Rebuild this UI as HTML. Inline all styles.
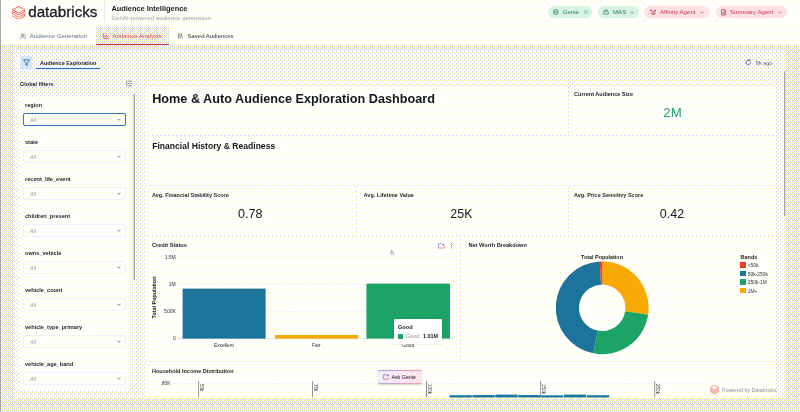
<!DOCTYPE html>
<html><head><meta charset="utf-8"><title>Audience Intelligence</title>
<style>
*{box-sizing:border-box;margin:0;padding:0}
html,body{width:800px;height:412px;overflow:hidden}
body{position:relative;background:#ededef;font-family:"Liberation Sans",Arial,sans-serif;color:#161b22}
.a{position:absolute;white-space:nowrap}
.t{position:absolute;white-space:nowrap;height:10px;line-height:10px}
.b{font-weight:700}
.card{position:absolute;background:#fffffb}
.lbl{font-size:5.5px;font-weight:700;color:#1b2128}
.sel{position:absolute;left:23.4px;width:102.4px;height:13.6px;border:0.7px solid #f1f1f7;border-radius:2px;background:transparent}
.sel i{position:absolute;left:5.6px;top:1.3px;height:10px;line-height:10px;font-size:5.4px;color:#8f979f}
.sel svg{position:absolute;right:4px;top:4.6px}
.flab{position:absolute;left:25px;height:10px;line-height:10px;font-size:5.6px;font-weight:700;color:#1b2128;white-space:nowrap}
.pill{position:absolute;top:6.1px;height:12.3px;border-radius:6.2px}
.pill span{position:absolute;top:1.2px;height:10px;line-height:10px;font-size:6.1px;white-space:nowrap}
.g{background:#d7f3e4}.g span{color:#2a7a4b}
.r{background:#fde1e3}.r span{color:#c9344f}
#root{position:absolute;left:0;top:0;width:800px;height:412px;will-change:transform;opacity:.999}
</style></head><body>
<div id="root">
<!-- dithered backgrounds -->
<svg class="a" style="left:0;top:0" width="800" height="412" viewBox="0 0 800 412" shape-rendering="crispEdges"><defs><pattern id="pw" x="0" y="0" width="8" height="8" patternUnits="userSpaceOnUse"><rect width="8" height="8" fill="#ffffff"/><rect x="0" y="0" width="1" height="1" fill="#ffff99"/><rect x="4" y="4" width="1" height="1" fill="#ffff99"/></pattern><pattern id="pc" x="0" y="0" width="8" height="8" patternUnits="userSpaceOnUse"><rect width="8" height="8" fill="#ffffff"/><rect x="0" y="0" width="1" height="1" fill="#ffff99"/><rect x="0" y="4" width="1" height="1" fill="#ffff99"/><rect x="4" y="0" width="1" height="1" fill="#ffff99"/><rect x="4" y="4" width="1" height="1" fill="#ffff99"/><rect x="0" y="3" width="1" height="1" fill="#ccccff"/><rect x="0" y="7" width="1" height="1" fill="#ccccff"/><rect x="4" y="3" width="1" height="1" fill="#ccccff"/><rect x="4" y="7" width="1" height="1" fill="#ccccff"/><rect x="2" y="1" width="1" height="1" fill="#ccccff"/><rect x="2" y="5" width="1" height="1" fill="#ccccff"/><rect x="6" y="1" width="1" height="1" fill="#ccccff"/><rect x="6" y="5" width="1" height="1" fill="#ccccff"/></pattern><pattern id="po" x="0" y="0" width="8" height="8" patternUnits="userSpaceOnUse"><rect width="8" height="8" fill="#ffffff"/><rect x="0" y="0" width="1" height="1" fill="#ffff99"/><rect x="4" y="0" width="1" height="1" fill="#ffff99"/><rect x="2" y="2" width="1" height="1" fill="#ffff99"/><rect x="6" y="2" width="1" height="1" fill="#ffff99"/><rect x="0" y="2" width="1" height="1" fill="#ffff99"/><rect x="0" y="4" width="1" height="1" fill="#ffff99"/><rect x="4" y="4" width="1" height="1" fill="#ffff99"/><rect x="2" y="6" width="1" height="1" fill="#ffff99"/><rect x="6" y="6" width="1" height="1" fill="#ffff99"/><rect x="4" y="6" width="1" height="1" fill="#ffff99"/><rect x="0" y="1" width="1" height="1" fill="#ccccff"/><rect x="2" y="1" width="1" height="1" fill="#ccccff"/><rect x="4" y="1" width="1" height="1" fill="#ccccff"/><rect x="6" y="1" width="1" height="1" fill="#ccccff"/><rect x="0" y="3" width="1" height="1" fill="#ccccff"/><rect x="2" y="3" width="1" height="1" fill="#ccccff"/><rect x="4" y="3" width="1" height="1" fill="#ccccff"/><rect x="6" y="3" width="1" height="1" fill="#ccccff"/><rect x="0" y="5" width="1" height="1" fill="#ccccff"/><rect x="2" y="5" width="1" height="1" fill="#ccccff"/><rect x="4" y="5" width="1" height="1" fill="#ccccff"/><rect x="6" y="5" width="1" height="1" fill="#ccccff"/><rect x="0" y="7" width="1" height="1" fill="#ccccff"/><rect x="2" y="7" width="1" height="1" fill="#ccccff"/><rect x="4" y="7" width="1" height="1" fill="#ccccff"/><rect x="6" y="7" width="1" height="1" fill="#ccccff"/><rect x="1" y="0" width="1" height="1" fill="#ccccff"/><rect x="5" y="0" width="1" height="1" fill="#ccccff"/><rect x="7" y="2" width="1" height="1" fill="#ccccff"/><rect x="1" y="4" width="1" height="1" fill="#ccccff"/><rect x="5" y="4" width="1" height="1" fill="#ccccff"/><rect x="3" y="6" width="1" height="1" fill="#ccccff"/></pattern></defs><rect x="0" y="0" width="800" height="412" fill="url(#po)"/><rect x="1" y="0" width="799" height="45" fill="url(#pw)"/><rect x="96" y="27" width="73" height="18" fill="url(#po)"/><rect x="14" y="50" width="772" height="348" fill="url(#pc)"/><rect x="20" y="96" width="109" height="294" fill="url(#pw)"/><rect x="145" y="87" width="422" height="47" fill="url(#pw)"/><rect x="570" y="87" width="206" height="47" fill="url(#pw)"/><rect x="145" y="136" width="631" height="49" fill="url(#pw)"/><rect x="145" y="187" width="211" height="48" fill="url(#pw)"/><rect x="358" y="187" width="209" height="48" fill="url(#pw)"/><rect x="570" y="187" width="206" height="48" fill="url(#pw)"/><rect x="145" y="237" width="315" height="123" fill="url(#pw)"/><rect x="462" y="237" width="314" height="123" fill="url(#pw)"/><rect x="145" y="362" width="631" height="36" fill="url(#pw)"/></svg>
<!-- window left edge -->
<div class="a" style="left:0;top:0;width:1.2px;height:412px;background:#a9a9a3"></div>

<!-- header -->
<svg class="a" style="left:12px;top:5.5px" width="13.4" height="13.6" viewBox="0 0 36 37" fill="#ff3621"><path d="M33.6 15.2 18 24 1.3 14.6 .5 15v6.800l17.500 9.800 15.600-8.700v3.600L18 35.300 1.300 25.900l-.8.400v1.200L18 37.300l17.500-9.800v-6.800l-.8-.4L18 29.600 2.400 20.900v-3.600L18 26l17.500-9.800V9.500l-.9-.5L18 18.300 3.200 10 18 1.800l12.200 6.800 1.100-.6V7.200L18-.2.500 9.600v1.100L18 20.500l15.600-8.800z"/></svg>
<div class="a" id="brand" style="left:28.2px;top:2.6px;height:18px;line-height:18px;font-size:15.2px;color:#171c22;-webkit-text-stroke:0.3px #171c22">databricks</div>
<div class="a" style="left:104px;top:2px;width:0.8px;height:20px;background:#e9e9f0"></div>
<div class="t b" style="left:111.4px;top:3.9px;font-size:7.4px;color:#161b22">Audience Intelligence</div>
<div class="t" style="left:111.4px;top:13px;font-size:6.1px;color:#9aa2ab">GenAI-powered audience generation</div>

<!-- pills -->
<div class="pill g" style="left:547.9px;width:44.6px">
 <svg class="a" style="left:5.2px;top:3.2px" width="5.6" height="6" viewBox="0 0 16 17" fill="none" stroke="#2a7a4b" stroke-width="1.8"><ellipse cx="8" cy="4" rx="6" ry="2.6"/><path d="M2 4v9c0 1.500 2.700 2.600 6 2.600s6-1.100 6-2.600V4M2 8.500c0 1.500 2.700 2.600 6 2.600s6-1.100 6-2.600"/></svg>
 <span style="left:14.8px">Genie</span>
 <svg class="a" style="left:35.8px;top:3.8px" width="4.6" height="4.6" viewBox="0 0 12 12" fill="none" stroke="#6fae88" stroke-width="1.5"><path d="M5 2H2v8h8V7M7 1.500h3.500V5M10.500 1.500 5.500 6.500"/></svg>
</div>
<div class="pill g" style="left:598px;width:41.4px">
 <svg class="a" style="left:5.2px;top:3.2px" width="6" height="6" viewBox="0 0 16 16" fill="none" stroke="#2a7a4b" stroke-width="1.8"><path d="M5 6V4.500a3 3 0 0 1 6 0V6M2.500 6h11l.8 7.500H1.700z" stroke-linejoin="round"/></svg>
 <span style="left:15px">MAS</span>
 <svg class="a" style="left:32px;top:5px" width="4" height="3" viewBox="0 0 8 5" fill="none" stroke="#2a7a4b" stroke-width="1.400"><path d="M1 1l3 3 3-3"/></svg>
</div>
<div class="pill r" style="left:644px;width:65.9px">
 <svg class="a" style="left:5.6px;top:3px" width="6.4" height="6.4" viewBox="0 0 16 16" fill="none" stroke="#c9344f" stroke-width="1.800"><path d="M2 3l5 4-3 5M7 7l6-3M9 13l4-2-1-4M4 12l5 1"/><circle cx="2.500" cy="3" r="1.200" fill="#c9344f"/><circle cx="13" cy="4" r="1.200" fill="#c9344f"/><circle cx="9" cy="13" r="1.200" fill="#c9344f"/></svg>
 <span style="left:16px">Affinity Agent</span>
 <svg class="a" style="left:56.400px;top:5px" width="4" height="3" viewBox="0 0 8 5" fill="none" stroke="#c9344f" stroke-width="1.400"><path d="M1 1l3 3 3-3"/></svg>
</div>
<div class="pill r" style="left:716px;width:70.9px">
 <svg class="a" style="left:5.200px;top:2.900px" width="5.400" height="6.600" viewBox="0 0 13 16" fill="none" stroke="#c9344f" stroke-width="1.800"><path d="M1.500 1.500h6.500l3.500 3.500v9.500h-10zM8 1.500V5h3.500M4 8.500h5M4 11.500h5"/></svg>
 <span style="left:14px">Summary Agent</span>
 <svg class="a" style="left:62.400px;top:5px" width="4" height="3" viewBox="0 0 8 5" fill="none" stroke="#c9344f" stroke-width="1.400"><path d="M1 1l3 3 3-3"/></svg>
</div>

<!-- tabs -->
<svg class="a" style="left:19.600px;top:32.800px" width="6.600" height="6.600" viewBox="0 0 16 16" fill="none" stroke="#5f7281" stroke-width="1.700"><circle cx="6" cy="5" r="2.800"/><path d="M1 14c0-3 2.200-4.800 5-4.800s5 1.800 5 4.800M11 2.500a2.800 2.800 0 0 1 0 5.200M12.500 9.600c1.700.700 2.700 2.200 2.700 4.400"/></svg>
<div class="t" style="left:29.700px;top:31.200px;font-size:6.100px;color:#5f7281">Audience Generation</div>
<div class="a" style="left:96px;top:43.600px;width:73.400px;height:1.500px;background:#dc4545"></div>
<svg class="a" style="left:103.400px;top:33px" width="5.800" height="6.200" viewBox="0 0 14 15" fill="none" stroke="#e04a45" stroke-width="1.700"><path d="M1.500 0v13.500H14M5 11V6M8.500 11V3M12 11V8"/></svg>
<div class="t" style="left:112.400px;top:31.200px;font-size:6.060px;color:#e04a45">Audience Analysis</div>
<svg class="a" style="left:178px;top:33.200px" width="5" height="6" viewBox="0 0 12 14" fill="none" stroke="#4a5560" stroke-width="1.700"><path d="M1.500 1v12M5 1v12M8 2l3 11"/></svg>
<div class="t" style="left:187.600px;top:31.200px;font-size:5.950px;color:#2c343c">Saved Audiences</div>

<!-- main container -->

<!-- toolbar -->
<div class="a" style="left:20px;top:56px;width:12.400px;height:13px;background:#d6e5f3;border-radius:1.600px"></div>
<svg class="a" style="left:22.900px;top:58.600px" width="7.200" height="7.400" viewBox="0 0 14 14.400" fill="none" stroke="#1f62a8" stroke-width="1.550" stroke-linejoin="round"><path d="M1.200 1.600h11.600L8.100 8.200v4.800L5.900 11.800V8.200z"/></svg>
<div class="t b" style="left:40px;top:58px;font-size:5.490px;color:#161b22">Audience Exploration</div>
<div class="a" style="left:36.400px;top:68px;width:63.200px;height:1.300px;background:#2272b4"></div>
<svg class="a" style="left:744.800px;top:59.300px" width="6.600" height="6.600" viewBox="0 0 14 14" fill="none" stroke="#48525c" stroke-width="1.700"><path d="M12 7a5 5 0 1 1-1.600-3.700M10.800.6v3H7.800"/></svg>
<div class="t" style="left:755.600px;top:58px;font-size:5.490px;color:#56616c">9h ago</div>

<!-- global filters -->
<div class="t b" style="left:20px;top:78.600px;font-size:5.500px;color:#161b22">Global filters</div>
<svg class="a" style="left:126px;top:80px" width="6.400" height="7" viewBox="0 0 13 14" fill="none" stroke="#5f7281" stroke-width="1.600"><path d="M1.500 1v12M4.500 2.200h8M8 7h4.500M4.500 11.800h8M7 5 4.800 7 7 9"/></svg>
<div class="a" style="left:133.100px;top:94px;width:0.900px;height:185.500px;background:#dcdce2"></div><div class="a" style="left:134px;top:94px;width:1.100px;height:185.500px;background:#a2a2a2"></div>
<div id="filters">
<div class="flab" style="top:99.50px">region</div>
<div class="sel" style="top:112.50px;border:0.9px solid #2b78bb;box-shadow:0 0 0.8px #8fbbe0;"><i>All</i><svg width="4" height="3" viewBox="0 0 8 5" fill="none" stroke="#4a5560" stroke-width="1.4"><path d="M1 1l3 3 3-3"/></svg></div>
<div class="flab" style="top:136.50px">state</div>
<div class="sel" style="top:149.50px;"><i>All</i><svg width="4" height="3" viewBox="0 0 8 5" fill="none" stroke="#4a5560" stroke-width="1.4"><path d="M1 1l3 3 3-3"/></svg></div>
<div class="flab" style="top:173.60px">recent_life_event</div>
<div class="sel" style="top:186.60px;"><i>All</i><svg width="4" height="3" viewBox="0 0 8 5" fill="none" stroke="#4a5560" stroke-width="1.4"><path d="M1 1l3 3 3-3"/></svg></div>
<div class="flab" style="top:210.60px">children_present</div>
<div class="sel" style="top:223.60px;"><i>All</i><svg width="4" height="3" viewBox="0 0 8 5" fill="none" stroke="#4a5560" stroke-width="1.4"><path d="M1 1l3 3 3-3"/></svg></div>
<div class="flab" style="top:247.60px">owns_vehicle</div>
<div class="sel" style="top:260.60px;"><i>All</i><svg width="4" height="3" viewBox="0 0 8 5" fill="none" stroke="#4a5560" stroke-width="1.4"><path d="M1 1l3 3 3-3"/></svg></div>
<div class="flab" style="top:284.80px">vehicle_count</div>
<div class="sel" style="top:297.80px;"><i>All</i><svg width="4" height="3" viewBox="0 0 8 5" fill="none" stroke="#4a5560" stroke-width="1.4"><path d="M1 1l3 3 3-3"/></svg></div>
<div class="flab" style="top:321.90px">vehicle_type_primary</div>
<div class="sel" style="top:334.90px;"><i>All</i><svg width="4" height="3" viewBox="0 0 8 5" fill="none" stroke="#4a5560" stroke-width="1.4"><path d="M1 1l3 3 3-3"/></svg></div>
<div class="flab" style="top:358.90px">vehicle_age_band</div>
<div class="sel" style="top:371.90px;"><i>All</i><svg width="4" height="3" viewBox="0 0 8 5" fill="none" stroke="#4a5560" stroke-width="1.4"><path d="M1 1l3 3 3-3"/></svg></div>
</div>

<!-- dashboard cards -->
<!-- main scrollbar -->
<div class="a" style="left:783.900px;top:71px;width:1.300px;height:145px;background:#a2a2a2"></div><div class="a" style="left:785.200px;top:71px;width:0.800px;height:145px;background:#e0e0e6"></div>

<div class="a b" id="title" style="left:152.200px;top:90.500px;height:16px;line-height:16px;font-size:12.680px;color:#11171c">Home &amp; Auto Audience Exploration Dashboard</div>
<div class="a b" id="sub" style="left:152.200px;top:140px;height:12px;line-height:12px;font-size:8.590px;color:#11171c">Financial History &amp; Readiness</div>

<div class="t lbl" style="left:574px;top:88.600px;font-size:5.550px">Current Audience Size</div>
<div class="a" style="left:572.600px;top:104.700px;width:200px;text-align:center;height:16px;line-height:16px;font-size:13.300px;color:#23a06b">2M</div>

<div class="t lbl" style="left:152px;top:189.600px">Avg. Financial Stability Score</div>
<div class="a" style="left:150.200px;top:205.500px;width:200px;text-align:center;height:16px;line-height:16px;font-size:12.500px;color:#11171c">0.78</div>
<div class="t lbl" style="left:363.600px;top:189.600px">Avg. Lifetime Value</div>
<div class="a" style="left:361.400px;top:205.500px;width:200px;text-align:center;height:16px;line-height:16px;font-size:12.400px;color:#11171c">25K</div>
<div class="t lbl" style="left:574px;top:189.600px">Avg. Price Sensitivy Score</div>
<div class="a" style="left:572px;top:205.500px;width:200px;text-align:center;height:16px;line-height:16px;font-size:12.500px;color:#11171c">0.42</div>

<!-- Credit status chart -->
<div class="t lbl" style="left:152px;top:240px;font-size:5.620px">Credit Status</div>
<svg class="a" style="left:145px;top:237px" width="315" height="123" viewBox="145 237 315 123" font-family="Liberation Sans, Arial, sans-serif">
 <g stroke="#d4d7dc" stroke-width="0.600" stroke-dasharray="0.800 1.400">
  <line x1="178" x2="454" y1="257.300" y2="257.300"/><line x1="178" x2="454" y1="284.300" y2="284.300"/><line x1="178" x2="454" y1="311.400" y2="311.400"/>
 </g>
 <line x1="177" x2="454" y1="338.600" y2="338.600" stroke="#cfd3d8" stroke-width="0.700"/>
 <g font-size="5" fill="#2a3138" text-anchor="end">
  <text x="175.800" y="259.100">1.5M</text><text x="175.800" y="286.100">1M</text><text x="175.800" y="313.200">500K</text><text x="175.800" y="340.300">0</text>
 </g>
 <text transform="translate(156.300 297.500) rotate(-90)" text-anchor="middle" font-size="5.410" font-weight="700" fill="#161b22">Total Population</text>
 <rect x="182.600" y="288.600" width="83" height="50" fill="#1c749b"/>
 <rect x="275" y="335" width="83" height="3.600" fill="#f8a904"/>
 <rect x="366.400" y="283.600" width="83.600" height="55" fill="#1ba466"/>
 <g font-size="4.930" fill="#2a3138" text-anchor="middle">
  <text x="224" y="347.200">Excellent</text><text x="316.200" y="347.200">Fair</text><text x="408.200" y="347.200">Good</text>
 </g>
</svg>
<!-- chart toolbar icons -->
<svg class="a" style="left:437.600px;top:243px" width="7" height="5.800" viewBox="0 0 14 12" fill="none"><defs><linearGradient id="gg1" x1="0" y1="0" x2="1" y2="1"><stop offset="0" stop-color="#5a9bea"/><stop offset=".55" stop-color="#d86fc0"/><stop offset="1" stop-color="#f08a5a"/></linearGradient></defs><path d="M1 1.500h6M1 1.500v9h12v-5" stroke="url(#gg1)" stroke-width="1.700"/><path d="M10.500 0l.9 2.100 2.100.9-2.100.9-.9 2.100-.9-2.100L7.500 3l2.100-.9z" fill="#d9468c"/></svg>
<div class="a" style="left:450.800px;top:243.200px;width:1.200px;height:1.200px;background:#5f7281;box-shadow:0 2.200px 0 #5f7281,0 4.400px 0 #5f7281"></div>
<!-- cursor -->
<svg class="a" style="left:389.800px;top:249.800px" width="4.400" height="5.600" viewBox="0 0 10 12" fill="#fff" stroke="#666" stroke-width="1.200"><path d="M3 6V1.500a1 1 0 0 1 2 0V5l3 .6c.8.200 1.200.800 1.100 1.600L8.500 11h-5L1 7.500c-.4-.8.600-1.500 1.200-.9z"/></svg>
<!-- tooltip -->
<div class="a" style="left:394px;top:319px;width:48.400px;height:25px;background:#fffffd;box-shadow:0 0 1.500px rgba(0,0,0,.25);border-radius:1px"></div>
<div class="t b" style="left:398px;top:321.600px;font-size:5.600px;color:#161b22">Good</div>
<div class="a" style="left:398px;top:334px;width:5px;height:4.800px;background:#1ba466"></div>
<div class="t" style="left:406px;top:331.400px;font-size:5.300px;color:#8a929a">Good:</div>
<div class="t b" style="left:423px;top:331.400px;font-size:5.400px;color:#161b22">1.01M</div>

<!-- Net worth chart -->
<div class="t lbl" style="left:468.400px;top:240px;font-size:5.620px">Net Worth Breakdown</div>
<div class="t b" style="left:552px;width:100px;text-align:center;top:251.800px;font-size:5.410px;color:#161b22">Total Population</div>
<svg class="a" style="left:550px;top:258px" width="106" height="100" viewBox="550 258 106 100">
 <g id="donut"><path fill="#f8a904" d="M602.20 261.40A46.4 46.4 0 0 1 648.09 314.66L625.15 311.23A23.2 23.2 0 0 0 602.20 284.60Z"/><path fill="#1ba466" d="M648.09 314.66A46.4 46.4 0 0 1 593.35 353.35L597.77 330.57A23.2 23.2 0 0 0 625.15 311.23Z"/><path fill="#1c749b" d="M593.35 353.35A46.4 46.4 0 0 1 599.77 261.46L600.99 284.63A23.2 23.2 0 0 0 597.77 330.57Z"/><path fill="#f43a26" d="M599.77 261.46A46.4 46.4 0 0 1 602.20 261.40L602.20 284.60A23.2 23.2 0 0 0 600.99 284.63Z"/></g>
</svg>
<div class="t b" style="left:740.600px;top:251.700px;font-size:5.500px;color:#161b22">Bands</div>
<div class="a" style="left:740px;top:262.300px;width:5.500px;height:5.500px;background:#f43a26"></div>
<div class="a" style="left:740px;top:270.700px;width:5.500px;height:5.500px;background:#1c749b"></div>
<div class="a" style="left:740px;top:279.100px;width:5.500px;height:5.500px;background:#1ba466"></div>
<div class="a" style="left:740px;top:287.600px;width:5.500px;height:5.500px;background:#f8a904"></div>
<div class="t" style="left:747.700px;top:261.1px;font-size:4.930px;color:#2a3138">&lt;50k</div>
<div class="t" style="left:747.700px;top:269.6px;font-size:4.930px;color:#2a3138">50k-250k</div>
<div class="t" style="left:747.700px;top:278px;font-size:4.930px;color:#2a3138">250k-1M</div>
<div class="t" style="left:747.700px;top:286.5px;font-size:4.930px;color:#2a3138">1M+</div>

<!-- Household income -->
<div class="t lbl" style="left:152px;top:366px">Household Income Distribution</div>
<svg class="a" style="left:145px;top:362px" width="631" height="35.500" viewBox="145 362 631 35.500" font-family="Liberation Sans, Arial, sans-serif">
 <line x1="173" x2="705" y1="383.400" y2="383.400" stroke="#d4d7dc" stroke-width="0.600" stroke-dasharray="0.800 1.400"/>
 <text x="170.600" y="385.200" font-size="5" fill="#2a3138" text-anchor="end">80K</text>
 <g stroke="#4a525a" stroke-width="0.600">
  <line x1="198.600" x2="198.600" y1="381" y2="397.500"/><line x1="312.500" x2="312.500" y1="381" y2="397.500"/><line x1="426.500" x2="426.500" y1="381" y2="397.500"/><line x1="540.700" x2="540.700" y1="381" y2="397.500"/><line x1="654.700" x2="654.700" y1="381" y2="397.500"/>
 </g>
 <g font-size="4.600" fill="#2a3138">
  <text transform="translate(200.1 384) rotate(90)">50k</text>
  <text transform="translate(314.1 384) rotate(90)">75k</text>
  <text transform="translate(428.1 384) rotate(90)">100k</text>
  <text transform="translate(542.3 384) rotate(90)">150k</text>
  <text transform="translate(656.3 384) rotate(90)">250k</text>
 </g>
 <g fill="#1c789e">
  <rect x="449.500" y="395.200" width="22.300" height="2.300"/><rect x="472.400" y="395" width="22.300" height="2.500"/><rect x="495.300" y="394.600" width="22.300" height="2.900"/><rect x="518.200" y="395" width="22.300" height="2.500"/><rect x="541.100" y="395.300" width="22.300" height="2.200"/><rect x="564" y="394.600" width="22.300" height="2.900"/><rect x="586.900" y="395.200" width="22.300" height="2.300"/>
 </g>
</svg>
<!-- Ask genie button -->
<div class="a" style="left:377.600px;top:370px;width:44.800px;height:14px;border-radius:2px;background:linear-gradient(100deg,#8fb2ee,#e79bd0 55%,#f3a0a8);box-shadow:0 0.500px 1.500px rgba(0,0,0,.18)"></div>
<div class="a" style="left:378.300px;top:370.700px;width:43.400px;height:12.600px;border-radius:1.500px;background:linear-gradient(100deg,#f1eafb,#fbe6f1 60%,#fde6e6)"></div>
<svg class="a" style="left:382.800px;top:374px" width="6.600" height="5.800" viewBox="0 0 14 12" fill="none"><defs><linearGradient id="gg2" x1="0" y1="0" x2="1" y2="1"><stop offset="0" stop-color="#4a8be6"/><stop offset=".55" stop-color="#d65fb8"/><stop offset="1" stop-color="#ee7a4a"/></linearGradient></defs><path d="M1 1.500h6M1 1.500v9h12v-5" stroke="url(#gg2)" stroke-width="1.700"/><path d="M10.500 0l.9 2.100 2.100.9-2.100.9-.9 2.100-.9-2.100L7.500 3l2.100-.9z" fill="#d9468c"/></svg>
<div class="t" style="left:391.400px;top:372px;font-size:5.330px;color:#161b22">Ask Genie</div>
<!-- powered by -->
<svg class="a" style="left:710px;top:385.400px" width="9" height="9.200" viewBox="0 0 36 37" fill="#f08f86" stroke="#f08f86" stroke-width="1.200"><path d="M33.6 15.2 18 24 1.3 14.600.500 15v6.800l17.500 9.800 15.600-8.700v3.600L18 35.300 1.300 25.900l-.8.400v1.200L18 37.300l17.500-9.800v-6.800l-.8-.4L18 29.600 2.400 20.900v-3.600L18 26l17.500-9.800V9.500l-.9-.5L18 18.300 3.200 10 18 1.800l12.200 6.800 1.100-.6V7.200L18-.2.500 9.600v1.100L18 20.500l15.600-8.800z"/></svg>
<div class="t" style="left:722px;top:385.300px;font-size:5.320px;color:#8b8f94">Powered by Databricks</div>

</div>
</body></html>
